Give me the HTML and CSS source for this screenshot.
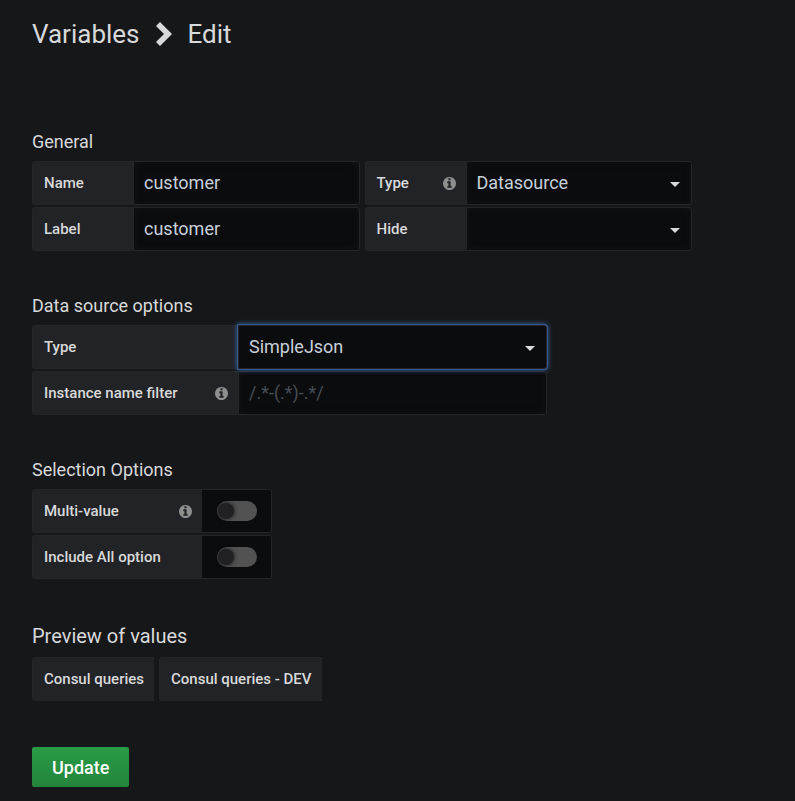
FILE: index.html
```html
<!DOCTYPE html>
<html lang="en">
<head>
<meta charset="utf-8">
<meta name="viewport" content="width=device-width, initial-scale=1">
<title>Variables - Edit</title>
<link rel="stylesheet" href="styles.css">
</head>
<body>
<svg class="sprite" aria-hidden="true">
  <symbol id="info" viewBox="0 0 1536 1536">
    <path d="M1024 1248v-160q0-14-9-23t-23-9h-96V544q0-14-9-23t-23-9H544q-14 0-23 9t-9 23v160q0 14 9 23t23 9h96v320h-96q-14 0-23 9t-9 23v160q0 14 9 23t23 9h448q14 0 23-9t9-23zM896 352V192q0-14-9-23t-23-9H672q-14 0-23 9t-9 23v160q0 14 9 23t23 9h192q14 0 23-9t9-23zm640 416q0 209-103 385.500T1153.500 1433 768 1536t-385.500-103T103 1153.500 0 768t103-385.500T382.500 103 768 0t385.500 103T1433 382.500 1536 768z"/>
  </symbol>
</svg>
<main class="page">
  <h1 class="title">
    <a href="#variables">Variables</a>
    <svg class="chevron" viewBox="0 0 16 24" aria-hidden="true"><path d="M0 4 4 0 16 12 4 24 0 20 8 12Z"/></svg>
    <span>Edit</span>
  </h1>
  <form class="form">
    <section class="group">
      <h2 class="heading">General</h2>
      <div class="fields fields-general">
        <div class="row">
          <label class="label" for="name">Name</label>
          <input class="control" id="name" type="text" value="customer">
        </div>
        <div class="row">
          <label class="label" for="type">Type <svg class="info"><use href="#info"/></svg></label>
          <div class="select"><select class="control" id="type"><option>Datasource</option></select></div>
        </div>
        <div class="row">
          <label class="label" for="label">Label</label>
          <input class="control" id="label" type="text" value="customer">
        </div>
        <div class="row">
          <label class="label" for="hide">Hide</label>
          <div class="select"><select class="control" id="hide"><option></option></select></div>
        </div>
      </div>
    </section>

    <section class="group">
      <h2 class="heading">Data source options</h2>
      <div class="fields fields-source">
        <div class="row">
          <label class="label" for="source">Type</label>
          <div class="select"><select class="control focused" id="source"><option>SimpleJson</option></select></div>
        </div>
        <div class="row">
          <label class="label" for="filter">Instance name filter <svg class="info"><use href="#info"/></svg></label>
          <input class="control" id="filter" type="text" placeholder="/.*-(.*)-.*/">
        </div>
      </div>
    </section>

    <section class="group">
      <h2 class="heading">Selection Options</h2>
      <div class="fields fields-selection">
        <div class="row">
          <label class="label" for="multi">Multi-value <svg class="info"><use href="#info"/></svg></label>
          <div class="switch"><input class="toggle" id="multi" type="checkbox"></div>
        </div>
        <div class="row">
          <label class="label" for="all">Include All option</label>
          <div class="switch"><input class="toggle" id="all" type="checkbox"></div>
        </div>
      </div>
    </section>

    <section class="group">
      <h2 class="heading heading-large">Preview of values</h2>
      <div class="values">
        <span class="label">Consul queries</span>
        <span class="label">Consul queries - DEV</span>
      </div>
    </section>

    <button class="update" type="button">Update</button>
  </form>
</main>
</body>
</html>
```
FILE: styles.css
```css
* {
  box-sizing: border-box;
}

body {
  margin: 0;
  background: #161719;
  color: #d8d9da;
  font-family: Roboto, "Liberation Sans", sans-serif;
}

.sprite {
  position: absolute;
  width: 0;
  height: 0;
}

.page {
  padding: 18px 32px 14px;
}

.title {
  display: flex;
  align-items: center;
  gap: 16px;
  margin: 0 0 81px;
  font-size: 26px;
  font-weight: 400;
  line-height: 32px;
}

.title a {
  color: inherit;
  text-decoration: none;
}

.chevron {
  width: 16px;
  height: 24px;
  fill: #d8d9da;
}

.group {
  margin-bottom: 44px;
}

.heading {
  margin: 0 0 8px;
  font-size: 18px;
  font-weight: 400;
  line-height: 22px;
}

.heading-large {
  font-size: 20px;
  line-height: 26px;
}

.fields {
  display: grid;
  gap: 2px 5px;
}

.fields-general {
  grid-template-columns: 1fr 1fr;
  max-width: 660px;
}

.fields-source {
  max-width: 515px;
}

.fields-selection {
  max-width: 240px;
}

.row {
  display: flex;
  height: 44px;
}

.label {
  display: flex;
  flex: none;
  align-items: center;
  justify-content: space-between;
  height: 44px;
  padding: 0 10px 0 11px;
  border: 1px solid #262628;
  border-right: 0;
  border-radius: 3px 0 0 3px;
  background: #222326;
  font-size: 15px;
  font-weight: 500;
  white-space: nowrap;
}

.fields-general .label {
  width: 101px;
}

.fields-source .label {
  width: 206px;
}

.fields-selection .label {
  width: 170px;
}

.info {
  width: 13px;
  height: 13px;
  fill: #8e8e8e;
}

.control {
  flex: 1;
  width: 100%;
  min-width: 0;
  height: 44px;
  padding: 0 10px 2px;
  border: 1px solid #262628;
  border-radius: 0 3px 3px 0;
  outline: 0;
  background: #0b0c0e;
  box-shadow: inset 0 0 6px #141416;
  color: #c7d0d9;
  font: 400 18px Roboto, "Liberation Sans", sans-serif;
  appearance: none;
}

.control::placeholder {
  color: #464c54;
}

.select {
  position: relative;
  flex: 1;
  min-width: 0;
}

.select::after {
  content: "";
  position: absolute;
  top: 21px;
  right: 12px;
  border: 5px solid transparent;
  border-top-color: #d8d9da;
  border-bottom: 0;
  pointer-events: none;
}

.focused {
  box-shadow: 0 0 0 1px #33578f, 0 0 5px 1px #3a64a8;
}

.switch {
  display: flex;
  flex: 1;
  align-items: center;
  justify-content: center;
  border: 1px solid #262628;
  border-left: 0;
  border-radius: 0 3px 3px 0;
  background: #0b0c0e;
}

.toggle {
  display: flex;
  align-items: center;
  width: 40px;
  height: 20px;
  margin: 0;
  padding: 0 1px;
  border-radius: 10px;
  background: #525252;
  appearance: none;
}

.toggle::before {
  content: "";
  width: 16px;
  height: 16px;
  border-radius: 50%;
  background: #212124;
  box-shadow: 0 0 4px #111214;
}

.toggle:checked {
  justify-content: flex-end;
}

.values {
  display: flex;
  flex-wrap: wrap;
  gap: 5px;
}

.update {
  height: 40px;
  margin-top: 2px;
  padding: 0 20px;
  border: 0;
  border-radius: 2px;
  background: linear-gradient(#299c46, #23843b);
  color: #fff;
  font: 500 18px Roboto, "Liberation Sans", sans-serif;
}
```
